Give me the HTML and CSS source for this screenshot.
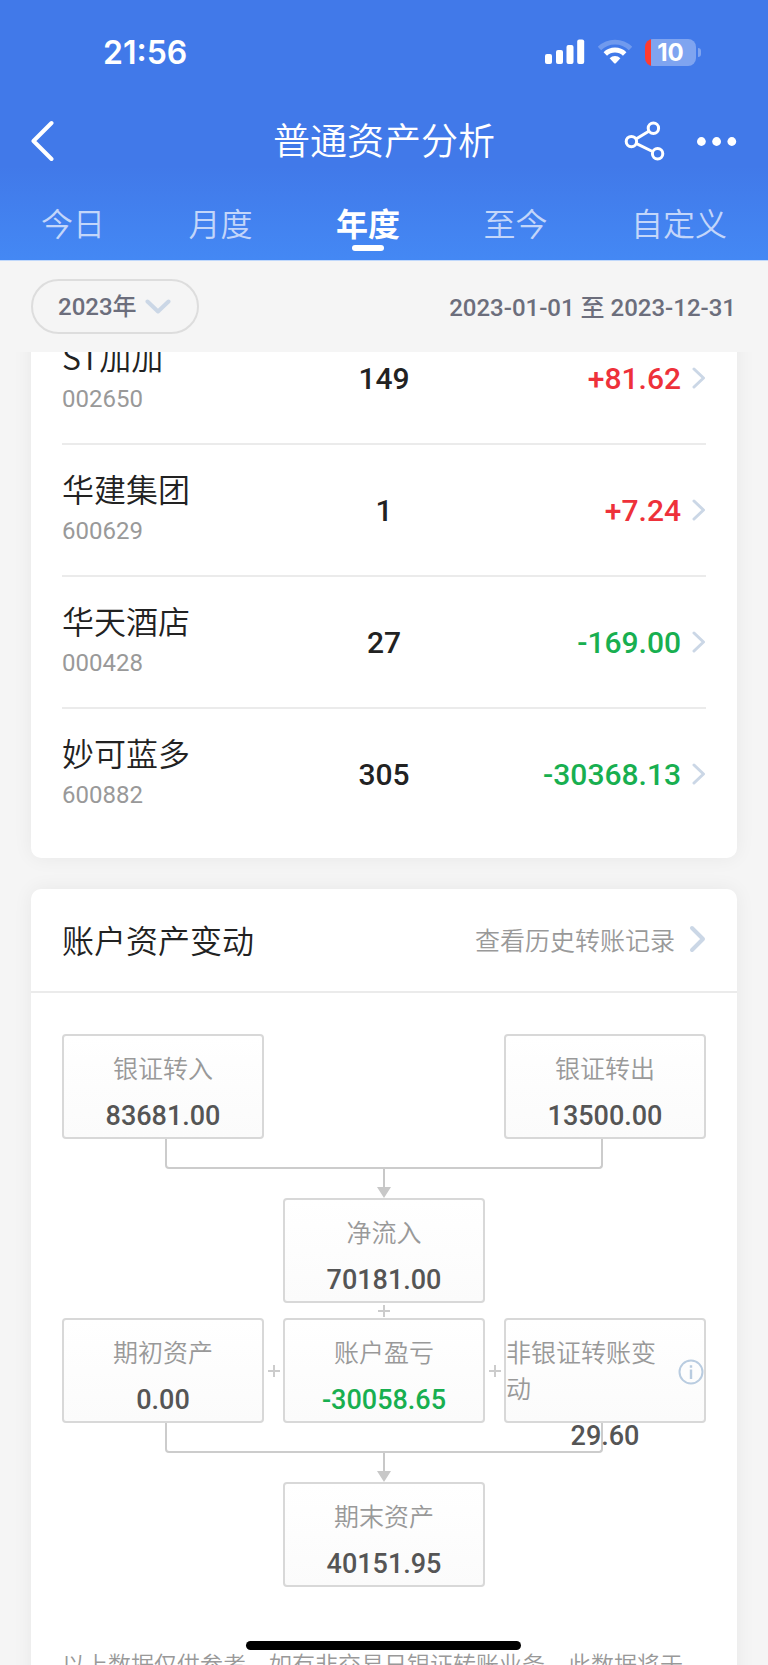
FILE: index.html
```html
<!DOCTYPE html>
<html lang="zh-CN">
<head>
<meta charset="utf-8">
<meta name="viewport" content="width=device-width, initial-scale=1">
<title>普通资产分析</title>
<link rel="stylesheet" href="styles.css">
</head>
<body>
<div class="app">
  <header class="header">
    <div class="status">
      <span class="status-time">21:56</span>
      <div class="status-icons">
        <svg class="signal" width="40" height="26" viewBox="0 0 40 26" fill="#fff" aria-hidden="true">
          <rect x="0" y="15" width="7" height="10" rx="2"/>
          <rect x="11" y="11" width="7" height="14" rx="2"/>
          <rect x="21.500" y="6" width="7" height="19" rx="2"/>
          <rect x="32.200" y="0.500" width="7" height="24.500" rx="2"/>
        </svg>
        <svg class="wifi" width="34" height="26" viewBox="0 0 34 26" fill="none" stroke="#fff" aria-hidden="true">
          <path d="M1.500 9.500A22 22 0 0 1 32.500 9.500" stroke-width="4.800" stroke-opacity=".25"/>
          <path d="M7.300 15A14 14 0 0 1 26.700 15" stroke-width="5"/>
          <path d="M11.600 19.200A7.700 7.700 0 0 1 22.400 19.200L17.800 24.200Q17 25 16.200 24.200Z" fill="#fff" stroke="none"/>
        </svg>
        <div class="battery"><span class="battery-level">10</span></div>
      </div>
    </div>
    <div class="nav">
      <button class="icon-btn nav-back" aria-label="返回">
        <svg width="24" height="42" viewBox="0 0 24 42" fill="none" stroke="#fff" stroke-width="4" stroke-linecap="round" stroke-linejoin="round"><path d="M21.500 3L3.500 21L21.500 39"/></svg>
      </button>
      <h1 class="nav-title">普通资产分析</h1>
      <div class="nav-actions">
        <button class="icon-btn" aria-label="分享">
          <svg width="42" height="42" viewBox="0 0 42 42" fill="none" stroke="#fff" stroke-width="3"><path d="M12 19L24.800 11.200M12.500 23.700L28.500 31.500"/><circle cx="29.400" cy="8.300" r="5.200"/><circle cx="7.400" cy="21.600" r="5.200"/><circle cx="33.600" cy="33.700" r="5.200"/></svg>
        </button>
        <button class="icon-btn" aria-label="更多">
          <svg width="42" height="42" viewBox="0 0 42 42" fill="#fff"><circle cx="5.400" cy="21.500" r="4.400"/><circle cx="20.600" cy="21.500" r="4.400"/><circle cx="35.800" cy="21.500" r="4.400"/></svg>
        </button>
      </div>
    </div>
    <nav class="tabs">
      <button class="tab">今日</button>
      <button class="tab">月度</button>
      <button class="tab tab-active" aria-current="page">年度</button>
      <button class="tab">至今</button>
      <button class="tab">自定义</button>
    </nav>
  </header>

  <div class="filter">
    <div class="year">
      <select class="year-select" aria-label="年份"><option>2023年</option></select>
      <svg class="year-arrow" width="26" height="16" viewBox="0 0 26 16" fill="none" stroke="#cbd7e6" stroke-width="4" stroke-linecap="round" stroke-linejoin="round" aria-hidden="true"><path d="M2.500 2.500L13 12.500L23.500 2.500"/></svg>
    </div>
    <span class="range">2023-01-01 至 2023-12-31</span>
  </div>

  <main class="content">
    <section class="card stocks">
      <table class="stock-table">
        <tbody>
          <tr>
            <td><span class="stock-name">ST加加</span><span class="stock-code">002650</span></td>
            <td class="stock-count">149</td>
            <td><a class="stock-profit up" href="#">+81.62<svg class="chevron" width="14" height="22" viewBox="0 0 14 22"><path d="M2 2L11.500 11L2 20"/></svg></a></td>
          </tr>
          <tr>
            <td><span class="stock-name">华建集团</span><span class="stock-code">600629</span></td>
            <td class="stock-count">1</td>
            <td><a class="stock-profit up" href="#">+7.24<svg class="chevron" width="14" height="22" viewBox="0 0 14 22"><path d="M2 2L11.500 11L2 20"/></svg></a></td>
          </tr>
          <tr>
            <td><span class="stock-name">华天酒店</span><span class="stock-code">000428</span></td>
            <td class="stock-count">27</td>
            <td><a class="stock-profit down" href="#">-169.00<svg class="chevron" width="14" height="22" viewBox="0 0 14 22"><path d="M2 2L11.500 11L2 20"/></svg></a></td>
          </tr>
          <tr>
            <td><span class="stock-name">妙可蓝多</span><span class="stock-code">600882</span></td>
            <td class="stock-count">305</td>
            <td><a class="stock-profit down" href="#">-30368.13<svg class="chevron" width="14" height="22" viewBox="0 0 14 22"><path d="M2 2L11.500 11L2 20"/></svg></a></td>
          </tr>
        </tbody>
      </table>
    </section>

    <section class="card">
      <div class="card-head">
        <h2 class="card-title">账户资产变动</h2>
        <a class="history" href="#">查看历史转账记录<svg class="chevron chevron-big" width="17" height="28" viewBox="0 0 17 28"><path d="M3 3L14 14L3 25"/></svg></a>
      </div>
      <div class="flow">
        <div class="flow-row">
          <div class="box"><div class="box-label">银证转入</div><div class="box-value">83681.00</div></div>
          <div class="box box-third"><div class="box-label">银证转出</div><div class="box-value">13500.00</div></div>
        </div>
        <div class="joint"><div class="bracket"></div><svg class="arrow" width="14" height="30" viewBox="0 0 14 30" aria-hidden="true"><path d="M6 0H8V18H14L7 29L0 18H6Z"/></svg></div>
        <div class="flow-row">
          <div class="box box-second"><div class="box-label">净流入</div><div class="box-value">70181.00</div></div>
        </div>
        <div class="plus-row"><svg class="plus" width="12" height="12" viewBox="0 0 12 12" aria-label="加"><path d="M6 0V12M0 6H12"/></svg></div>
        <div class="flow-row">
          <div class="box"><div class="box-label">期初资产</div><div class="box-value">0.00</div></div>
          <svg class="plus" width="12" height="12" viewBox="0 0 12 12" aria-label="加"><path d="M6 0V12M0 6H12"/></svg>
          <div class="box"><div class="box-label">账户盈亏</div><div class="box-value down">-30058.65</div></div>
          <svg class="plus" width="12" height="12" viewBox="0 0 12 12" aria-label="加"><path d="M6 0V12M0 6H12"/></svg>
          <div class="box">
            <div class="box-label box-label-info"><span class="box-label-text">非银证转账变动</span><button class="icon-btn" aria-label="说明"><svg width="26" height="26" viewBox="0 0 26 26" fill="none" stroke="#b9cce0" stroke-width="2"><circle cx="13" cy="13" r="11.500"/><path d="M13 10.500V20M13 6.300V8.800" stroke-width="2.400"/></svg></button></div>
            <div class="box-value">29.60</div>
          </div>
        </div>
        <div class="joint"><div class="bracket"></div><svg class="arrow" width="14" height="30" viewBox="0 0 14 30" aria-hidden="true"><path d="M6 0H8V18H14L7 29L0 18H6Z"/></svg></div>
        <div class="flow-row">
          <div class="box box-second"><div class="box-label">期末资产</div><div class="box-value">40151.95</div></div>
        </div>
      </div>
      <p class="note">以上数据仅供参考，如有非交易日银证转账业务，此数据将于</p>
    </section>
  </main>
  <div class="home-indicator"></div>
</div>
</body>
</html>
```

FILE: styles.css
```css
* { box-sizing: border-box; }
body {
  margin: 0;
  background: #f5f5f5;
  color: #222;
  font-family: Roboto, "Noto Sans CJK SC", sans-serif;
}
button, select {
  margin: 0;
  border: 0;
  background: none;
  color: inherit;
  font: inherit;
}
a { color: inherit; text-decoration: none; }
svg { display: block; flex: none; }
.app {
  position: relative;
  display: flex;
  flex-direction: column;
  height: 100vh;
  overflow: hidden;
}

/* header */
.header {
  flex: none;
  color: #fff;
  background: linear-gradient(#4179e9 0, #4179e9 64%, #4488f4 100%);
  border-bottom: 1px solid #c0d8fb;
}
.status {
  display: flex;
  align-items: center;
  justify-content: space-between;
  height: 104px;
  padding: 0 72px 0 103px;
}
.status-time { padding-top: 2px; font: 600 32px/40px Inter, sans-serif; }
.status-icons { display: flex; align-items: center; }
.wifi { margin: 0 13px 0 13px; }
.battery {
  position: relative;
  width: 51px;
  height: 27px;
  border-radius: 8px;
  background: linear-gradient(90deg, #ff3b30 0, #ff3b30 6px, #7fa4f0 6px);
  text-align: center;
}
.battery::after {
  content: "";
  position: absolute;
  left: 53px;
  top: 9px;
  width: 3px;
  height: 9px;
  border-radius: 0 4px 4px 0;
  background: #7fa4f0;
}
.battery-level { font: 700 24px/27px Inter, sans-serif; }
.nav {
  display: grid;
  grid-template-columns: 1fr auto 1fr;
  align-items: center;
  height: 74px;
  padding: 0 30px;
}
.icon-btn { padding: 0; cursor: pointer; }
.nav-back { justify-self: start; }
.nav-title {
  margin: 0;
  padding-top: 4px;
  font-size: 37px;
  font-weight: 350;
  line-height: 56px;
}
.nav-actions { display: flex; justify-content: flex-end; gap: 30px; }
.tabs {
  display: flex;
  justify-content: space-between;
  height: 82px;
  padding: 20px 41px 0;
}
.tab {
  position: relative;
  height: 53px;
  padding: 0;
  font-size: 32px;
  font-weight: 350;
  line-height: 48px;
  color: #c3d6fa;
}
.tab-active { color: #fff; font-weight: 700; }
.tab-active::after {
  content: "";
  position: absolute;
  left: 50%;
  bottom: 0;
  width: 32px;
  height: 6px;
  margin-left: -16px;
  border-radius: 3px;
  background: #fff;
}

/* filter bar */
.filter {
  display: flex;
  flex: none;
  align-items: center;
  justify-content: space-between;
  height: 91px;
  padding: 0 32px 0 31px;
  color: #6c6e7c;
  font-size: 24px;
  font-weight: 500;
}
.year { position: relative; }
.year-select {
  appearance: none;
  height: 55px;
  padding: 0 60px 0 25px;
  border: 2px solid #ddd;
  border-radius: 28px;
}
.year-arrow {
  position: absolute;
  right: 28px;
  top: 20px;
  pointer-events: none;
}
.range { padding-bottom: 3px; }

/* cards */
.content {
  flex: 1;
  min-height: 0;
  padding: 0 31px;
  overflow: hidden;
}
.card {
  margin-bottom: 31px;
  border-radius: 10px;
  background: #fff;
  box-shadow: 0 0 20px rgba(0, 0, 0, .06);
}
.stocks {
  margin-top: -39px;
  padding: 0 31px 19px;
}
.stock-table {
  width: 100%;
  border-spacing: 0;
  table-layout: fixed;
}
.stock-table td {
  height: 132px;
  padding: 0;
  border-bottom: 2px solid #ebebeb;
}
.stock-table tr:last-child td { height: 130px; border-bottom: 0; }
.stock-name, .stock-code { display: block; }
.stock-name {
  font-family: "Noto Sans CJK SC", sans-serif;
  font-size: 32px;
  font-weight: 350;
  line-height: 42px;
}
.stock-code { color: #999; font-size: 24px; line-height: 44px; }
.stock-count { text-align: center; font-size: 30px; font-weight: 500; }
.stock-profit {
  display: flex;
  align-items: center;
  justify-content: flex-end;
  gap: 11px;
  font-size: 30px;
  font-weight: 500;
}
.up { color: #ee313a; }
.down { color: #18af50; }
.chevron {
  fill: none;
  stroke: #cbd7e6;
  stroke-width: 3;
  stroke-linecap: round;
  stroke-linejoin: round;
}
.chevron-big { stroke-width: 4; }
.card-head {
  display: flex;
  align-items: center;
  justify-content: space-between;
  height: 104px;
  padding: 0 31px 2px;
  border-bottom: 2px solid #ebebeb;
}
.card-title { margin: 0; font-size: 32px; font-weight: 350; }
.history {
  display: flex;
  align-items: center;
  gap: 14px;
  color: #999;
  font-size: 25px;
  font-weight: 350;
}

/* asset flow diagram */
.flow { padding: 41px 31px 0; }
.flow-row {
  display: grid;
  grid-template-columns: 1fr 19px 1fr 19px 1fr;
  align-items: center;
  justify-items: center;
  height: 105px;
}
.box {
  width: 100%;
  height: 105px;
  padding-top: 16px;
  border: 2px solid #d8d8d8;
  border-radius: 4px;
  background: linear-gradient(#fff, #fbfbfb);
  text-align: center;
}
.box-second { grid-column: 3; }
.box-third { grid-column: 5; }
.box-label { color: #999; font-size: 25px; font-weight: 350; line-height: 36px; }
.box-label-info { display: flex; align-items: center; text-align: left; }
.box-label-text { flex: 1; }
.box-value {
  margin-top: 8px;
  color: #555;
  font-size: 27px;
  font-weight: 500;
  line-height: 40px;
}
.box-value.down { color: #18af50; }
.joint { height: 59px; }
.bracket {
  height: 30px;
  margin: 0 16%;
  border: 2px solid #ccc;
  border-top: 0;
  border-radius: 0 0 4px 4px;
}
.arrow { margin: 0 auto; fill: #c8c8c8; }
.plus { fill: none; stroke: #ccc; stroke-width: 2; }
.plus-row {
  display: flex;
  align-items: center;
  justify-content: center;
  height: 15px;
}
.note {
  margin: 0;
  padding: 61px 31px 40px;
  color: #999;
  font-size: 23px;
  font-weight: 350;
  line-height: 36px;
}
.home-indicator {
  position: absolute;
  left: 50%;
  bottom: 15px;
  width: 275px;
  height: 9px;
  margin-left: -138px;
  border-radius: 5px;
  background: #000;
}
```
